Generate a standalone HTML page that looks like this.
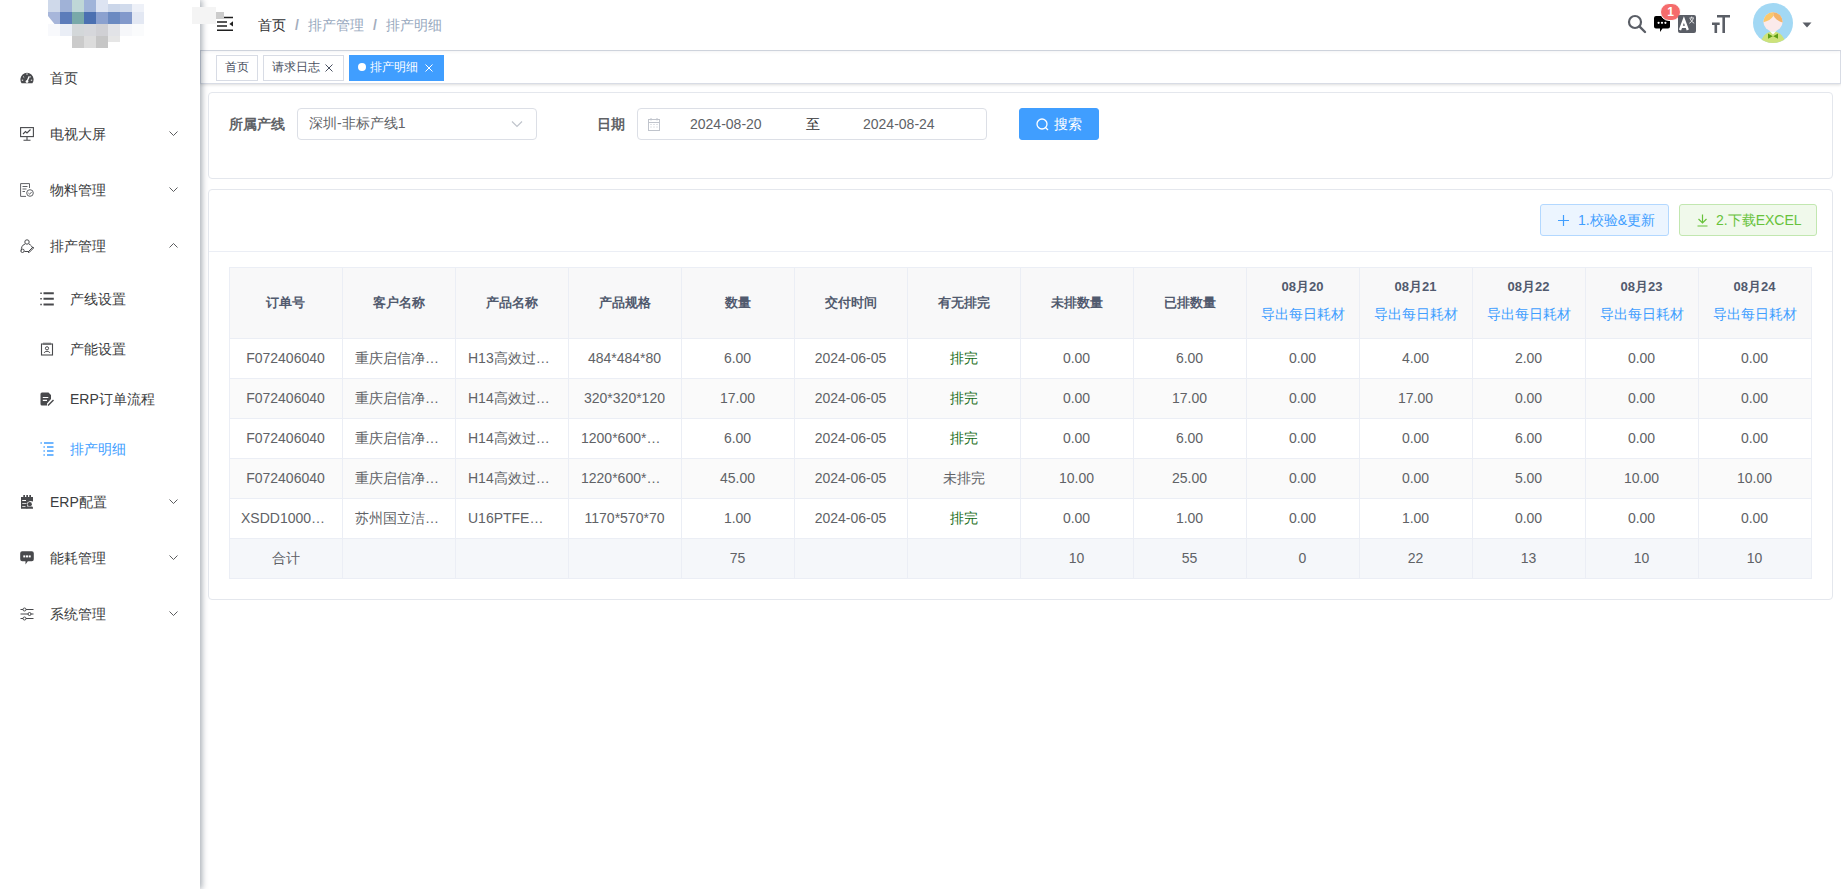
<!DOCTYPE html>
<html><head><meta charset="utf-8">
<style>
*{box-sizing:border-box;margin:0;padding:0}
html,body{width:1841px;height:889px;overflow:hidden;background:#fff;font-family:"Liberation Sans",sans-serif;}
.abs{position:absolute;z-index:4}
#sidebar{position:absolute;left:0;top:0;width:200px;height:889px;background:#fff;box-shadow:2px 0 6px rgba(0,21,41,.35);z-index:5}
.mi{position:absolute;left:0;width:200px;height:56px;line-height:56px;font-size:14px;color:#3c3d40}
.mi .ic{position:absolute;left:20px;top:21px;width:14px;height:14px}
.mi .tx{position:absolute;left:50px;top:0}
.mi .ar{position:absolute;left:169px;top:23px;width:9px;height:9px}
.si{position:absolute;left:0;width:200px;height:50px;line-height:50px;font-size:14px;color:#3c3d40}
.si .ic{position:absolute;left:40px;top:18px;width:14px;height:14px}
.si .tx{position:absolute;left:70px;top:0}
#navbar{position:absolute;left:200px;top:0;width:1641px;height:50px;background:#fff;box-shadow:0 1px 4px rgba(0,21,41,.08);z-index:3}
#tags{position:absolute;left:200px;top:50px;width:1641px;height:34px;background:#fff;border:1px solid #d8dce5;box-shadow:0 1px 3px 0 rgba(0,0,0,.12),0 0 3px 0 rgba(0,0,0,.04);z-index:2}
.tag{position:absolute;top:4px;height:26px;line-height:22px;border:1px solid #d8dce5;color:#495060;background:#fff;font-size:12px;padding:0 8px;white-space:nowrap}
.card{position:absolute;left:208px;width:1625px;border:1px solid #e4e7ed;border-radius:4px;background:#fff;}
.lbl{position:absolute;font-size:14px;font-weight:bold;color:#606266;line-height:32px}
.inp{position:absolute;height:32px;border:1px solid #dcdfe6;border-radius:4px;background:#fff;font-size:14px;color:#606266;line-height:29px}
.btn{position:absolute;height:32px;border-radius:3px;font-size:14px;line-height:30px;white-space:nowrap}
table{border-collapse:collapse;table-layout:fixed;position:absolute;left:229px;top:267px}
td,th{width:113px;border:1px solid #ebeef5;text-align:center;font-size:14px;color:#606266;white-space:nowrap;overflow:hidden;padding:0}
th{background:#f8f8f9;color:#515a6e;font-size:13px;font-weight:bold;height:71px}
td{height:40px}
tr.st td{background:#fafafa}
tr.ft td{background:#f5f7fa}
.g{color:#008000}
.lk{color:#409eff;font-weight:normal;font-size:14px;display:block;margin-top:9px}
.th{width:113px;height:71px;line-height:71px;text-align:center;font-size:13px;font-weight:bold;color:#515a6e;z-index:3}
.thd{width:113px;height:71px;text-align:center;z-index:3}
.thd b{position:absolute;left:0;top:11px;width:113px;line-height:18px;font-size:13px;color:#515a6e}
.thd span{position:absolute;left:0;top:37px;width:113px;line-height:20px;font-size:14px;color:#409eff}
.td{width:113px;height:40px;line-height:40px;text-align:center;font-size:14px;color:#606266;white-space:nowrap;z-index:3}
.td.g{color:#1a6e1a}
</style></head><body>

<div id="sidebar">
<div class="abs" style="left:48px;top:0px;width:12px;height:12px;background:#cfd9ea"></div>
<div class="abs" style="left:60px;top:0px;width:12px;height:12px;background:#a0b2d7"></div>
<div class="abs" style="left:72px;top:0px;width:12px;height:12px;background:#bfd7d7"></div>
<div class="abs" style="left:84px;top:0px;width:12px;height:12px;background:#a0b4d9"></div>
<div class="abs" style="left:96px;top:0px;width:12px;height:12px;background:#dde4f2"></div>
<div class="abs" style="left:108px;top:4px;width:12px;height:8px;background:#cbd6e9"></div>
<div class="abs" style="left:120px;top:4px;width:12px;height:8px;background:#d1dbec"></div>
<div class="abs" style="left:132px;top:4px;width:12px;height:8px;background:#eef1f8"></div>
<div class="abs" style="left:48px;top:12px;width:12px;height:12px;background:#a7b6da"></div>
<div class="abs" style="left:60px;top:12px;width:12px;height:12px;background:#5c7cba"></div>
<div class="abs" style="left:72px;top:12px;width:12px;height:12px;background:#79a9a9"></div>
<div class="abs" style="left:84px;top:12px;width:12px;height:12px;background:#4b70b1"></div>
<div class="abs" style="left:96px;top:12px;width:12px;height:12px;background:#8ba1cf"></div>
<div class="abs" style="left:108px;top:12px;width:12px;height:12px;background:#6b8ac1"></div>
<div class="abs" style="left:120px;top:12px;width:12px;height:12px;background:#8299cb"></div>
<div class="abs" style="left:132px;top:12px;width:12px;height:12px;background:#e3e8f3"></div>
<div class="abs" style="left:48px;top:24px;width:12px;height:12px;background:#f8f9fc"></div>
<div class="abs" style="left:60px;top:24px;width:12px;height:12px;background:#eaeef6"></div>
<div class="abs" style="left:72px;top:24px;width:12px;height:12px;background:#d3d7d9"></div>
<div class="abs" style="left:84px;top:24px;width:12px;height:12px;background:#d6d7db"></div>
<div class="abs" style="left:96px;top:24px;width:12px;height:12px;background:#d0d0d4"></div>
<div class="abs" style="left:108px;top:24px;width:12px;height:12px;background:#e2e3e7"></div>
<div class="abs" style="left:120px;top:24px;width:12px;height:12px;background:#f6f7fa"></div>
<div class="abs" style="left:132px;top:24px;width:12px;height:12px;background:#fafbfc"></div>
<div class="abs" style="left:72px;top:36px;width:12px;height:12px;background:#cbcbcb"></div>
<div class="abs" style="left:84px;top:36px;width:12px;height:12px;background:#dcdcdc"></div>
<div class="abs" style="left:96px;top:36px;width:12px;height:12px;background:#c6c6c6"></div>
<div class="abs" style="left:108px;top:36px;width:12px;height:6px;background:#e6e6e6"></div>
<svg class="abs" style="left:48px;top:16px" width="7" height="8" viewBox="0 0 7 8"><path d="M0 0 L0 8 L6.5 8 Z" fill="#fff"/></svg>
<div class="mi" style="top:50px"><svg class="ic" viewBox="0 0 14 14"><path d="M1.6 12.2 A6.6 6.6 0 1 1 12.4 12.2 Z" fill="#48494c"/><path d="M7 10.5 L9.3 5.2" stroke="#fff" stroke-width="1.3"/><circle cx="7" cy="10.6" r="1.4" fill="#fff"/><path d="M3.2 5.6 L4.2 6.5 M7 2.3 V3.8 M10.8 5.6 L9.8 6.5 M1.8 9.2 H3.2 M10.8 9.2 H12.2" stroke="#fff" stroke-width="1"/></svg><span class="tx">首页</span></div>
<div class="mi" style="top:106px"><svg class="ic" viewBox="0 0 14 14"><rect x="0.6" y="0.6" width="12.8" height="9" fill="none" stroke="#48494c" stroke-width="1.1"/><path d="M3 7 L5.5 4.5 L7 6 L10.5 2.5" fill="none" stroke="#48494c" stroke-width="1.1"/><path d="M7 9.6 V13 M3.5 13.3 H10.5" stroke="#48494c" stroke-width="1.1"/></svg><span class="tx">电视大屏</span><svg class="ar" viewBox="0 0 9 9"><path d="M0.5 2.5 L4.5 6.5 L8.5 2.5" fill="none" stroke="#48494c" stroke-width="0.9"/></svg></div>
<div class="mi" style="top:162px"><svg class="ic" viewBox="0 0 14 14"><path d="M9.5 5 V0.6 H0.6 V13.4 H6" fill="none" stroke="#606266" stroke-width="1"/><path d="M2.5 3.5 H7.5 M2.5 6 H6.5 M2.5 8.5 H5" stroke="#606266" stroke-width="1"/><circle cx="10" cy="10" r="3.3" fill="none" stroke="#606266" stroke-width="1"/><path d="M8.4 10 L9.6 11.2 L11.6 9" fill="none" stroke="#606266" stroke-width="1"/></svg><span class="tx">物料管理</span><svg class="ar" viewBox="0 0 9 9"><path d="M0.5 2.5 L4.5 6.5 L8.5 2.5" fill="none" stroke="#48494c" stroke-width="0.9"/></svg></div>
<div class="mi" style="top:218px"><svg class="ic" viewBox="0 0 14 14"><circle cx="7" cy="3" r="2.2" fill="none" stroke="#48494c" stroke-width="1"/><path d="M5 5 C2 6 1 9 1.5 11.5 M9 5 C11 6 12.5 8 12.5 9" fill="none" stroke="#48494c" stroke-width="1"/><circle cx="2.5" cy="11.8" r="1.7" fill="none" stroke="#48494c" stroke-width="1"/><path d="M4.5 12.5 H8 M8 13 L13 8 L13.8 8.8 L8.8 13.8 Z" fill="none" stroke="#48494c" stroke-width="1"/></svg><span class="tx">排产管理</span><svg class="ar" viewBox="0 0 9 9"><path d="M0.5 6.5 L4.5 2.5 L8.5 6.5" fill="none" stroke="#48494c" stroke-width="0.9"/></svg></div>
<div class="si" style="top:274px"><svg class="ic" viewBox="0 0 14 14"><path d="M0.3 1.2 H1.8 M0.3 6.8 H1.8 M0.3 12.4 H1.8" stroke="#48494c" stroke-width="1.5"/><path d="M3.5 1.2 H13.8 M3.5 6.8 H13.8 M3.5 12.4 H13.8" stroke="#48494c" stroke-width="2"/></svg><span class="tx">产线设置</span></div>
<div class="si" style="top:324px"><svg class="ic" viewBox="0 0 14 14"><rect x="1.5" y="2" width="11" height="11" fill="none" stroke="#48494c" stroke-width="1.1"/><path d="M4 0.5 V3 M6 0.5 V3 M8 0.5 V3 M10 0.5 V3" stroke="#48494c" stroke-width="0.9"/><circle cx="7" cy="6.3" r="1.6" fill="none" stroke="#48494c" stroke-width="1"/><path d="M4.2 11 C4.5 8.8 9.5 8.8 9.8 11" fill="none" stroke="#48494c" stroke-width="1"/></svg><span class="tx">产能设置</span></div>
<div class="si" style="top:374px"><svg class="ic" viewBox="0 0 14 14"><path d="M0.5 2 Q0.5 0.5 2 0.5 H8.5 L11 3 V7 L7 11.5 V13.5 H2 Q0.5 13.5 0.5 12 Z" fill="#48494c"/><path d="M2.8 5.5 H8.3 M2.8 8.3 H7" stroke="#fff" stroke-width="1.2"/><path d="M8 13.5 L13.5 8" stroke="#48494c" stroke-width="1.4"/></svg><span class="tx">ERP订单流程</span></div>
<div class="si" style="top:424px;color:#409eff"><svg class="ic" viewBox="0 0 14 14"><path d="M0.5 1 H1.8 M4 1 H13.5 M3.5 5 H4.8 M7 5 H13.5 M3.5 9 H4.8 M7 9 H13.5 M3.5 13 H4.8 M7 13 H13.5" stroke="#409eff" stroke-width="1.6"/></svg><span class="tx">排产明细</span></div>
<div class="mi" style="top:474px"><svg class="ic" viewBox="0 0 14 14"><path d="M3.3 0 H5 V2.5 H3.3 Z M6.3 0 H8 V2.5 H6.3 Z M9.3 0 H11 V2.5 H9.3 Z" fill="#48494c"/><path d="M1 2 H13 V6.6 Q10 4.8 7.3 7.6 V13.8 H1 Z" fill="#48494c"/><path d="M2.2 5.1 H6 V5.9 H2.2 Z M2.2 8.3 H6.5 V9.1 H2.2 Z M2.2 11.2 H5.5 V12 H2.2 Z" fill="#fff"/><circle cx="9.8" cy="9.2" r="2.1" fill="#48494c"/><path d="M6.6 13.8 V12.8 Q6.6 11.6 8 11.6 H11.6 Q13 11.6 13 12.8 V13.8 Z" fill="#48494c"/></svg><span class="tx">ERP配置</span><svg class="ar" viewBox="0 0 9 9"><path d="M0.5 2.5 L4.5 6.5 L8.5 2.5" fill="none" stroke="#48494c" stroke-width="0.9"/></svg></div>
<div class="mi" style="top:530px"><svg class="ic" viewBox="0 0 14 14"><path d="M2.2 0.3 H11.8 Q13.8 0.3 13.8 2.3 V8.3 Q13.8 10.3 11.8 10.3 H7.8 L5.5 13.5 V10.3 H2.2 Q0.2 10.3 0.2 8.3 V2.3 Q0.2 0.3 2.2 0.3 Z" fill="#48494c"/><rect x="3.3" y="4.4" width="2" height="2" fill="#fff"/><rect x="6" y="4.4" width="2" height="2" fill="#fff"/><rect x="8.7" y="4.4" width="2" height="2" fill="#fff"/></svg><span class="tx">能耗管理</span><svg class="ar" viewBox="0 0 9 9"><path d="M0.5 2.5 L4.5 6.5 L8.5 2.5" fill="none" stroke="#48494c" stroke-width="0.9"/></svg></div>
<div class="mi" style="top:586px"><svg class="ic" viewBox="0 0 14 14"><path d="M0.5 2.5 H13.5 M0.5 7 H13.5 M0.5 11.5 H13.5" stroke="#48494c" stroke-width="1"/><circle cx="4.5" cy="2.5" r="1.5" fill="#fff" stroke="#48494c" stroke-width="1"/><circle cx="9.5" cy="7" r="1.5" fill="#fff" stroke="#48494c" stroke-width="1"/><circle cx="4.5" cy="11.5" r="1.5" fill="#fff" stroke="#48494c" stroke-width="1"/></svg><span class="tx">系统管理</span><svg class="ar" viewBox="0 0 9 9"><path d="M0.5 2.5 L4.5 6.5 L8.5 2.5" fill="none" stroke="#48494c" stroke-width="0.9"/></svg></div>
</div>

<div id="navbar">
</div>

<svg class="abs" style="left:217px;top:16px" width="16" height="16" viewBox="0 0 16 16"><path d="M0 1.6 H16 M0 5.9 H10 M0 10.1 H10 M0 14.2 H16" stroke="#1f1f1f" stroke-width="1.5"/><path d="M16 5.2 L12.4 8 L16 10.6 Z" fill="#1f1f1f"/></svg>
<div class="abs" style="left:192px;top:7px;width:24px;height:17px;background:#f4f4f4;z-index:6"></div>
<div class="abs" style="left:216px;top:12px;width:8px;height:7px;background:#cccccc;z-index:6"></div>
<div class="abs" style="left:258px;top:0;height:50px;line-height:50px;font-size:14px;white-space:nowrap"><span style="color:#303133">首页</span><span style="color:#a3adbd;margin:0 9px;font-weight:bold">/</span><span style="color:#97a8be">排产管理</span><span style="color:#a3adbd;margin:0 9px;font-weight:bold">/</span><span style="color:#97a8be">排产明细</span></div>



<svg class="abs" style="left:1627px;top:14px;z-index:4" width="20" height="20" viewBox="0 0 20 20"><circle cx="8" cy="8" r="6" fill="none" stroke="#5a5e66" stroke-width="2.2"/><path d="M12.4 12.4 L18 18" stroke="#5a5e66" stroke-width="2.4" stroke-linecap="round"/></svg>
<svg class="abs" style="left:1654px;top:16px;z-index:4" width="17" height="17" viewBox="0 0 17 17"><path d="M2 0 H14 Q16 0 16 2 V10.5 Q16 12.5 14 12.5 H8.5 L6 16 V12.5 H2 Q0 12.5 0 10.5 V2 Q0 0 2 0 Z" fill="#000"/><circle cx="4.6" cy="6.8" r="1.1" fill="#fff"/><circle cx="8" cy="6.8" r="1.1" fill="#fff"/><circle cx="11.4" cy="6.8" r="1.1" fill="#fff"/></svg>
<div class="abs" style="left:1660px;top:3px;width:21px;height:18px;border-radius:9px;background:#f56c6c;border:1px solid #fff;color:#fff;font-size:12px;font-weight:bold;line-height:16px;text-align:center;z-index:4">1</div>
<svg class="abs" style="left:1678px;top:15px;z-index:4" width="18" height="18" viewBox="0 0 18 18"><rect x="0" y="0" width="18" height="18" rx="2" fill="#5a5e66"/><path d="M2 15 L5.9 4.6 L9.8 15 M3.4 11.9 H8.4" fill="none" stroke="#fff" stroke-width="2.3"/><path d="M11.5 3 H16 M13.7 1.5 V3 M12 3.5 Q13.5 7 16.2 8.3 M15.4 3.5 Q14 7 11.3 8.3" fill="none" stroke="#fff" stroke-width="0.8"/></svg>
<svg class="abs" style="left:1712px;top:15px;z-index:4" width="19" height="18" viewBox="0 0 19 18"><path d="M5 1.3 H18 M11.7 1.3 V18 M0 8.8 H7.7 M3.8 8.8 V18" fill="none" stroke="#5a5e66" stroke-width="2.6"/></svg>
<svg class="abs" style="left:1753px;top:3px;z-index:4" width="40" height="40" viewBox="0 0 40 40"><defs><clipPath id="cc"><circle cx="20" cy="20" r="20"/></clipPath></defs><circle cx="20" cy="20" r="20" fill="#a2d8f4"/><g clip-path="url(#cc)"><ellipse cx="20" cy="42.5" rx="12.5" ry="14" fill="#cde27b"/><path d="M16.8 28.3 L20 31.5 L23.2 28.3 Z" fill="#fff"/><path d="M15 30.5 L19.8 33.2 L15 35.8 Z M25 30.5 L20.2 33.2 L25 35.8 Z" fill="#5f9e16"/></g><circle cx="20" cy="18.8" r="9.6" fill="#fbeaea"/><path d="M10.4 19.2 A9.6 9.6 0 0 1 20 9.2 L20.6 12.8 C18.6 16.2 14.5 18.4 10.4 19.2 Z" fill="#fbc86c"/><path d="M20 9.2 A9.6 9.6 0 0 1 29.6 19.4 C26.5 18.8 22.5 16.5 20.6 12.8 Z" fill="#f4b46a"/></svg>
<svg class="abs" style="left:1802px;top:22px;z-index:4" width="10" height="6" viewBox="0 0 10 6"><path d="M0.5 0.5 H9.5 L5 5.5 Z" fill="#5a5e66"/></svg>
<div id="tags">
<div class="tag" style="left:15px;width:42px;text-align:center;padding:0">首页</div>
<div class="tag" style="left:62px;width:81px;padding-left:8px">请求日志<svg style="position:absolute;left:61px;top:8px" width="8" height="8" viewBox="0 0 8 8"><path d="M0.5 0.5 L7.5 7.5 M7.5 0.5 L0.5 7.5" stroke="#495060" stroke-width="1"/></svg></div>
<div class="tag" style="left:148px;width:95px;background:#409eff;border-color:#409eff;color:#fff;padding-left:20px"><span style="position:absolute;left:8px;top:7px;width:8px;height:8px;border-radius:4px;background:#fff"></span>排产明细<svg style="position:absolute;left:75px;top:8px" width="8" height="8" viewBox="0 0 8 8"><path d="M0.5 0.5 L7.5 7.5 M7.5 0.5 L0.5 7.5" stroke="#fff" stroke-width="1"/></svg></div>
</div>
</div>

<div class="card" style="top:92px;height:87px"></div>
<div class="card" style="top:189px;height:411px"></div>

<div class="lbl abs" style="left:229px;top:108px">所属产线</div>
<div class="inp abs" style="left:297px;top:108px;width:240px;padding-left:11px">深圳-非标产线1<svg style="position:absolute;left:213px;top:11px" width="12" height="8" viewBox="0 0 12 8"><path d="M1 1.5 L6 6.5 L11 1.5" fill="none" stroke="#c0c4cc" stroke-width="1.2"/></svg></div>
<div class="lbl abs" style="left:597px;top:108px">日期</div>
<div class="inp abs" style="left:637px;top:108px;width:350px;line-height:30px">
<svg style="position:absolute;left:10px;top:9px" width="12" height="13" viewBox="0 0 12 13"><rect x="0.5" y="1.5" width="11" height="11" fill="none" stroke="#c0c4cc" stroke-width="1"/><path d="M0.5 4.5 H11.5 M3 0 V2.5 M9 0 V2.5" stroke="#c0c4cc" stroke-width="1"/><path d="M2.5 6.5 H3.5 M5.5 6.5 H6.5 M8.5 6.5 H9.5 M2.5 9 H3.5 M5.5 9 H6.5 M8.5 9 H9.5" stroke="#c0c4cc" stroke-width="1"/></svg>
<span style="position:absolute;left:52px;top:0">2024-08-20</span>
<span style="position:absolute;left:168px;top:0;color:#303133">至</span>
<span style="position:absolute;left:225px;top:0">2024-08-24</span>
</div>
<div class="btn abs" style="left:1019px;top:108px;width:80px;background:#409eff;border:1px solid #409eff;color:#fff">
<svg style="position:absolute;left:16px;top:9px" width="13" height="13" viewBox="0 0 13 13"><circle cx="6" cy="6" r="5" fill="none" stroke="#fff" stroke-width="1.3"/><path d="M9.5 9.5 L12 12" stroke="#fff" stroke-width="1.3"/></svg>
<span style="position:absolute;left:34px;top:0">搜索</span></div>

<div class="btn abs" style="left:1540px;top:204px;width:129px;background:#ecf5ff;border:1px solid #b3d8ff;color:#409eff">
<svg style="position:absolute;left:17px;top:10px" width="11" height="11" viewBox="0 0 11 11"><path d="M5.5 0 V11 M0 5.5 H11" stroke="#409eff" stroke-width="1.2"/></svg>
<span style="position:absolute;left:37px;top:0">1.校验&amp;更新</span></div>
<div class="btn abs" style="left:1679px;top:204px;width:138px;background:#f0f9eb;border:1px solid #c2e7b0;color:#67c23a">
<svg style="position:absolute;left:17px;top:9px" width="11" height="13" viewBox="0 0 11 13"><path d="M5.5 0.5 V9 M1.5 5 L5.5 9 L9.5 5 M0.5 12 H10.5" fill="none" stroke="#67c23a" stroke-width="1.2"/></svg>
<span style="position:absolute;left:36px;top:0">2.下载EXCEL</span></div>
<div class="abs" style="left:209px;top:251px;width:1623px;height:1px;background:#ebeef5;z-index:1"></div>

<div class="abs" style="left:229px;top:267px;width:1582px;height:71px;background:#f8f8f9;z-index:1"></div>
<div class="abs" style="left:229px;top:378px;width:1582px;height:40px;background:#fafafa;z-index:1"></div>
<div class="abs" style="left:229px;top:458px;width:1582px;height:40px;background:#fafafa;z-index:1"></div>
<div class="abs" style="left:229px;top:538px;width:1582px;height:40px;background:#f5f7fa;z-index:1"></div>
<div class="abs" style="left:229px;top:267px;width:1583px;height:1px;background:#ebeef5;z-index:2"></div>
<div class="abs" style="left:229px;top:338px;width:1583px;height:1px;background:#ebeef5;z-index:2"></div>
<div class="abs" style="left:229px;top:378px;width:1583px;height:1px;background:#ebeef5;z-index:2"></div>
<div class="abs" style="left:229px;top:418px;width:1583px;height:1px;background:#ebeef5;z-index:2"></div>
<div class="abs" style="left:229px;top:458px;width:1583px;height:1px;background:#ebeef5;z-index:2"></div>
<div class="abs" style="left:229px;top:498px;width:1583px;height:1px;background:#ebeef5;z-index:2"></div>
<div class="abs" style="left:229px;top:538px;width:1583px;height:1px;background:#ebeef5;z-index:2"></div>
<div class="abs" style="left:229px;top:578px;width:1583px;height:1px;background:#ebeef5;z-index:2"></div>
<div class="abs" style="left:229px;top:267px;width:1px;height:312px;background:#ebeef5;z-index:2"></div>
<div class="abs" style="left:342px;top:267px;width:1px;height:312px;background:#ebeef5;z-index:2"></div>
<div class="abs" style="left:455px;top:267px;width:1px;height:312px;background:#ebeef5;z-index:2"></div>
<div class="abs" style="left:568px;top:267px;width:1px;height:312px;background:#ebeef5;z-index:2"></div>
<div class="abs" style="left:681px;top:267px;width:1px;height:312px;background:#ebeef5;z-index:2"></div>
<div class="abs" style="left:794px;top:267px;width:1px;height:312px;background:#ebeef5;z-index:2"></div>
<div class="abs" style="left:907px;top:267px;width:1px;height:312px;background:#ebeef5;z-index:2"></div>
<div class="abs" style="left:1020px;top:267px;width:1px;height:312px;background:#ebeef5;z-index:2"></div>
<div class="abs" style="left:1133px;top:267px;width:1px;height:312px;background:#ebeef5;z-index:2"></div>
<div class="abs" style="left:1246px;top:267px;width:1px;height:312px;background:#ebeef5;z-index:2"></div>
<div class="abs" style="left:1359px;top:267px;width:1px;height:312px;background:#ebeef5;z-index:2"></div>
<div class="abs" style="left:1472px;top:267px;width:1px;height:312px;background:#ebeef5;z-index:2"></div>
<div class="abs" style="left:1585px;top:267px;width:1px;height:312px;background:#ebeef5;z-index:2"></div>
<div class="abs" style="left:1698px;top:267px;width:1px;height:312px;background:#ebeef5;z-index:2"></div>
<div class="abs" style="left:1811px;top:267px;width:1px;height:312px;background:#ebeef5;z-index:2"></div>
<div class="th abs" style="left:229px;top:267px">订单号</div>
<div class="th abs" style="left:342px;top:267px">客户名称</div>
<div class="th abs" style="left:455px;top:267px">产品名称</div>
<div class="th abs" style="left:568px;top:267px">产品规格</div>
<div class="th abs" style="left:681px;top:267px">数量</div>
<div class="th abs" style="left:794px;top:267px">交付时间</div>
<div class="th abs" style="left:907px;top:267px">有无排完</div>
<div class="th abs" style="left:1020px;top:267px">未排数量</div>
<div class="th abs" style="left:1133px;top:267px">已排数量</div>
<div class="thd abs" style="left:1246px;top:267px"><b>08月20</b><span>导出每日耗材</span></div>
<div class="thd abs" style="left:1359px;top:267px"><b>08月21</b><span>导出每日耗材</span></div>
<div class="thd abs" style="left:1472px;top:267px"><b>08月22</b><span>导出每日耗材</span></div>
<div class="thd abs" style="left:1585px;top:267px"><b>08月23</b><span>导出每日耗材</span></div>
<div class="thd abs" style="left:1698px;top:267px"><b>08月24</b><span>导出每日耗材</span></div>
<div class="td abs" style="left:229px;top:338px">F072406040</div>
<div class="td abs" style="left:342px;top:338px;text-align:left;padding-left:13px">重庆启信净…</div>
<div class="td abs" style="left:455px;top:338px;text-align:left;padding-left:13px">H13高效过…</div>
<div class="td abs" style="left:568px;top:338px">484*484*80</div>
<div class="td abs" style="left:681px;top:338px">6.00</div>
<div class="td abs" style="left:794px;top:338px">2024-06-05</div>
<div class="td g abs" style="left:907px;top:338px">排完</div>
<div class="td abs" style="left:1020px;top:338px">0.00</div>
<div class="td abs" style="left:1133px;top:338px">6.00</div>
<div class="td abs" style="left:1246px;top:338px">0.00</div>
<div class="td abs" style="left:1359px;top:338px">4.00</div>
<div class="td abs" style="left:1472px;top:338px">2.00</div>
<div class="td abs" style="left:1585px;top:338px">0.00</div>
<div class="td abs" style="left:1698px;top:338px">0.00</div>
<div class="td abs" style="left:229px;top:378px">F072406040</div>
<div class="td abs" style="left:342px;top:378px;text-align:left;padding-left:13px">重庆启信净…</div>
<div class="td abs" style="left:455px;top:378px;text-align:left;padding-left:13px">H14高效过…</div>
<div class="td abs" style="left:568px;top:378px">320*320*120</div>
<div class="td abs" style="left:681px;top:378px">17.00</div>
<div class="td abs" style="left:794px;top:378px">2024-06-05</div>
<div class="td g abs" style="left:907px;top:378px">排完</div>
<div class="td abs" style="left:1020px;top:378px">0.00</div>
<div class="td abs" style="left:1133px;top:378px">17.00</div>
<div class="td abs" style="left:1246px;top:378px">0.00</div>
<div class="td abs" style="left:1359px;top:378px">17.00</div>
<div class="td abs" style="left:1472px;top:378px">0.00</div>
<div class="td abs" style="left:1585px;top:378px">0.00</div>
<div class="td abs" style="left:1698px;top:378px">0.00</div>
<div class="td abs" style="left:229px;top:418px">F072406040</div>
<div class="td abs" style="left:342px;top:418px;text-align:left;padding-left:13px">重庆启信净…</div>
<div class="td abs" style="left:455px;top:418px;text-align:left;padding-left:13px">H14高效过…</div>
<div class="td abs" style="left:568px;top:418px;text-align:left;padding-left:13px">1200*600*…</div>
<div class="td abs" style="left:681px;top:418px">6.00</div>
<div class="td abs" style="left:794px;top:418px">2024-06-05</div>
<div class="td g abs" style="left:907px;top:418px">排完</div>
<div class="td abs" style="left:1020px;top:418px">0.00</div>
<div class="td abs" style="left:1133px;top:418px">6.00</div>
<div class="td abs" style="left:1246px;top:418px">0.00</div>
<div class="td abs" style="left:1359px;top:418px">0.00</div>
<div class="td abs" style="left:1472px;top:418px">6.00</div>
<div class="td abs" style="left:1585px;top:418px">0.00</div>
<div class="td abs" style="left:1698px;top:418px">0.00</div>
<div class="td abs" style="left:229px;top:458px">F072406040</div>
<div class="td abs" style="left:342px;top:458px;text-align:left;padding-left:13px">重庆启信净…</div>
<div class="td abs" style="left:455px;top:458px;text-align:left;padding-left:13px">H14高效过…</div>
<div class="td abs" style="left:568px;top:458px;text-align:left;padding-left:13px">1220*600*…</div>
<div class="td abs" style="left:681px;top:458px">45.00</div>
<div class="td abs" style="left:794px;top:458px">2024-06-05</div>
<div class="td abs" style="left:907px;top:458px">未排完</div>
<div class="td abs" style="left:1020px;top:458px">10.00</div>
<div class="td abs" style="left:1133px;top:458px">25.00</div>
<div class="td abs" style="left:1246px;top:458px">0.00</div>
<div class="td abs" style="left:1359px;top:458px">0.00</div>
<div class="td abs" style="left:1472px;top:458px">5.00</div>
<div class="td abs" style="left:1585px;top:458px">10.00</div>
<div class="td abs" style="left:1698px;top:458px">10.00</div>
<div class="td abs" style="left:229px;top:498px;text-align:left;padding-left:12px">XSDD1000…</div>
<div class="td abs" style="left:342px;top:498px;text-align:left;padding-left:13px">苏州国立洁…</div>
<div class="td abs" style="left:455px;top:498px;text-align:left;padding-left:13px">U16PTFE…</div>
<div class="td abs" style="left:568px;top:498px">1170*570*70</div>
<div class="td abs" style="left:681px;top:498px">1.00</div>
<div class="td abs" style="left:794px;top:498px">2024-06-05</div>
<div class="td g abs" style="left:907px;top:498px">排完</div>
<div class="td abs" style="left:1020px;top:498px">0.00</div>
<div class="td abs" style="left:1133px;top:498px">1.00</div>
<div class="td abs" style="left:1246px;top:498px">0.00</div>
<div class="td abs" style="left:1359px;top:498px">1.00</div>
<div class="td abs" style="left:1472px;top:498px">0.00</div>
<div class="td abs" style="left:1585px;top:498px">0.00</div>
<div class="td abs" style="left:1698px;top:498px">0.00</div>
<div class="td abs" style="left:229px;top:538px">合计</div>
<div class="td abs" style="left:681px;top:538px">75</div>
<div class="td abs" style="left:1020px;top:538px">10</div>
<div class="td abs" style="left:1133px;top:538px">55</div>
<div class="td abs" style="left:1246px;top:538px">0</div>
<div class="td abs" style="left:1359px;top:538px">22</div>
<div class="td abs" style="left:1472px;top:538px">13</div>
<div class="td abs" style="left:1585px;top:538px">10</div>
<div class="td abs" style="left:1698px;top:538px">10</div>

</body></html>
